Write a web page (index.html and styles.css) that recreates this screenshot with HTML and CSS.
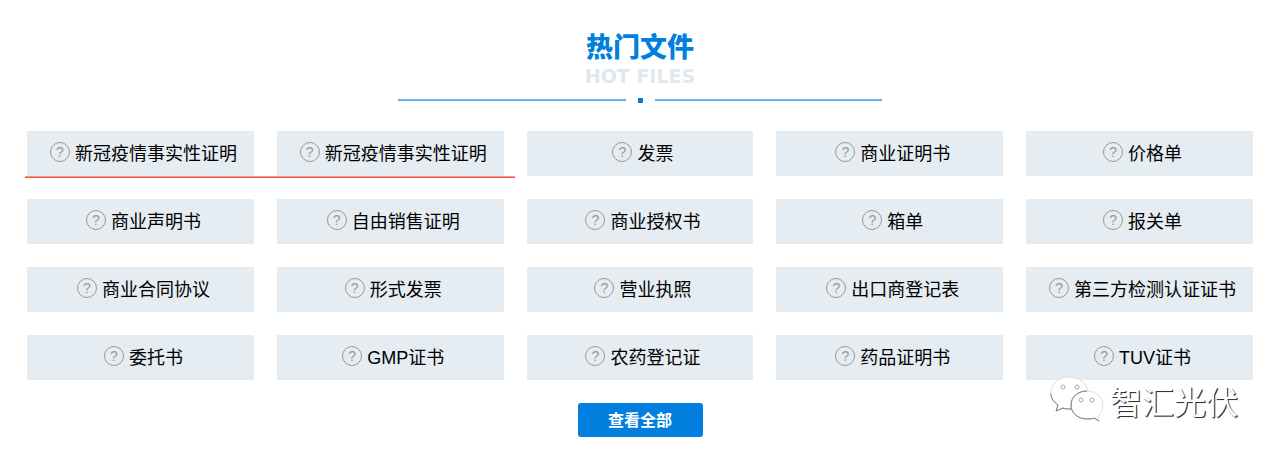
FILE: index.html
```html
<!DOCTYPE html>
<html lang="zh-CN">
<head>
  <meta charset="utf-8">
  <title>热门文件</title>
  <link rel="stylesheet" href="styles.css">
</head>
<body>
  <section class="hot">
    <header class="hot-head">
      <h2>热门文件</h2>
      <p>HOT FILES</p>
      <div class="divider"><span class="dot"></span></div>
    </header>

    <div class="files">
      <a href="#"><span class="help">?</span>新冠疫情事实性证明</a>
      <a href="#"><span class="help">?</span>新冠疫情事实性证明</a>
      <a href="#"><span class="help">?</span>发票</a>
      <a href="#"><span class="help">?</span>商业证明书</a>
      <a href="#"><span class="help">?</span>价格单</a>
      <a href="#"><span class="help">?</span>商业声明书</a>
      <a href="#"><span class="help">?</span>自由销售证明</a>
      <a href="#"><span class="help">?</span>商业授权书</a>
      <a href="#"><span class="help">?</span>箱单</a>
      <a href="#"><span class="help">?</span>报关单</a>
      <a href="#"><span class="help">?</span>商业合同协议</a>
      <a href="#"><span class="help">?</span>形式发票</a>
      <a href="#"><span class="help">?</span>营业执照</a>
      <a href="#"><span class="help">?</span>出口商登记表</a>
      <a href="#"><span class="help">?</span>第三方检测认证证书</a>
      <a href="#"><span class="help">?</span>委托书</a>
      <a href="#"><span class="help">?</span>GMP证书</a>
      <a href="#"><span class="help">?</span>农药登记证</a>
      <a href="#"><span class="help">?</span>药品证明书</a>
      <a href="#"><span class="help">?</span>TUV证书</a>
      <div class="underline"></div>
    </div>

    <button type="button" class="more">查看全部</button>

    <div class="watermark">
      <svg width="54" height="48" viewBox="0 0 54 48" aria-hidden="true">
        <g class="bubble">
          <path d="M19 1C9 1 1 8 1 17c0 5 3 9 7 12l-2 6 7-3c2 1 4 1 7 1 10 0 18-7 18-16S29 1 19 1z"/>
          <path class="front" d="M37 15c-9 0-16 6-16 14s7 14 16 14c3 0 5 0 7-1l5 3-1-5c3-2 5-6 5-11 0-8-7-14-16-14z"/>
        </g>
        <path class="rim" d="M37 15c-9 0-16 6-16 14s7 14 16 14c3 0 5 0 7-1l5 3"/>
        <path class="rim" d="M1 18c0 5 3 8 7 11l-2 6 7-3c2 1 4 1 8 1"/>
        <g class="eyes">
          <circle cx="13" cy="11" r="2"/>
          <circle cx="27" cy="11" r="2"/>
          <circle cx="31" cy="24" r="2"/>
          <circle cx="42" cy="24" r="2"/>
        </g>
      </svg>
      <span>智汇光伏</span>
    </div>
  </section>
</body>
</html>
```

FILE: styles.css
```css
body {
  margin: 0;
  background: #fff;
  color: #000;
  font-family: "Liberation Sans", "Noto Sans CJK SC", sans-serif;
}

.hot {
  position: relative;
  padding: 30px 27px 22px;
}

.hot-head {
  text-align: center;
}

.hot-head h2 {
  margin: 0;
  color: #007fdf;
  font-size: 27px;
  font-weight: 900;
  line-height: 36px;
}

.hot-head p {
  margin: 0;
  color: #dfe8f0;
  font-family: "DejaVu Sans", sans-serif;
  font-size: 19px;
  font-weight: bold;
  line-height: 20px;
}

.divider {
  display: flex;
  align-items: center;
  gap: 12px;
  width: 40%;
  max-width: 484px;
  height: 6px;
  margin: 11px auto 28px;
}

.divider::before,
.divider::after {
  content: "";
  flex: 1;
  height: 2px;
  background: linear-gradient(#9ccbf2, #3e95e2);
}

.dot {
  width: 5px;
  height: 5px;
  background: #007fdf;
}

.files {
  position: relative;
  display: grid;
  grid-template-columns: repeat(5, 1fr);
  gap: 23px;
}

.files a {
  display: flex;
  align-items: center;
  justify-content: center;
  height: 45px;
  padding: 0 0 4px 6px;
  box-sizing: border-box;
  background: #e5ecf2;
  color: #000;
  font-size: 18px;
  text-decoration: none;
}

.help {
  width: 18px;
  height: 18px;
  margin-right: 5px;
  border: 1px solid #999;
  border-radius: 50%;
  color: #999;
  font-size: 14px;
  line-height: 18px;
  text-align: center;
}

/* marks the first two files */
.underline {
  position: absolute;
  top: 45px;
  left: -2px;
  width: 40%;
  height: 2px;
  background: linear-gradient(#f9b5ac, #f5341c);
}

.more {
  display: block;
  width: 125px;
  height: 34px;
  margin: 23px auto 0;
  padding: 0 0 2px;
  border: none;
  border-radius: 3px;
  background: #007fdf;
  color: #fff;
  font-family: inherit;
  font-size: 16px;
  font-weight: bold;
  cursor: pointer;
}

.watermark {
  position: absolute;
  right: 42px;
  bottom: 35px;
  display: flex;
  align-items: center;
  gap: 6px;
  color: #fff;
  font-family: "Noto Sans CJK SC", sans-serif;
  font-size: 32px;
  font-weight: 400;
  line-height: 48px;
  text-shadow: 1px 1px 0 #333, 1px 1px 1px #777;
}

.watermark svg {
  overflow: visible;
}

.bubble {
  fill: #fff;
  stroke: #ddd;
  stroke-width: 1;
}

.rim {
  fill: none;
  stroke: #777;
  stroke-width: 1;
}

.eyes {
  fill: #fff;
  stroke: #aaa;
  stroke-width: 1;
}
```
